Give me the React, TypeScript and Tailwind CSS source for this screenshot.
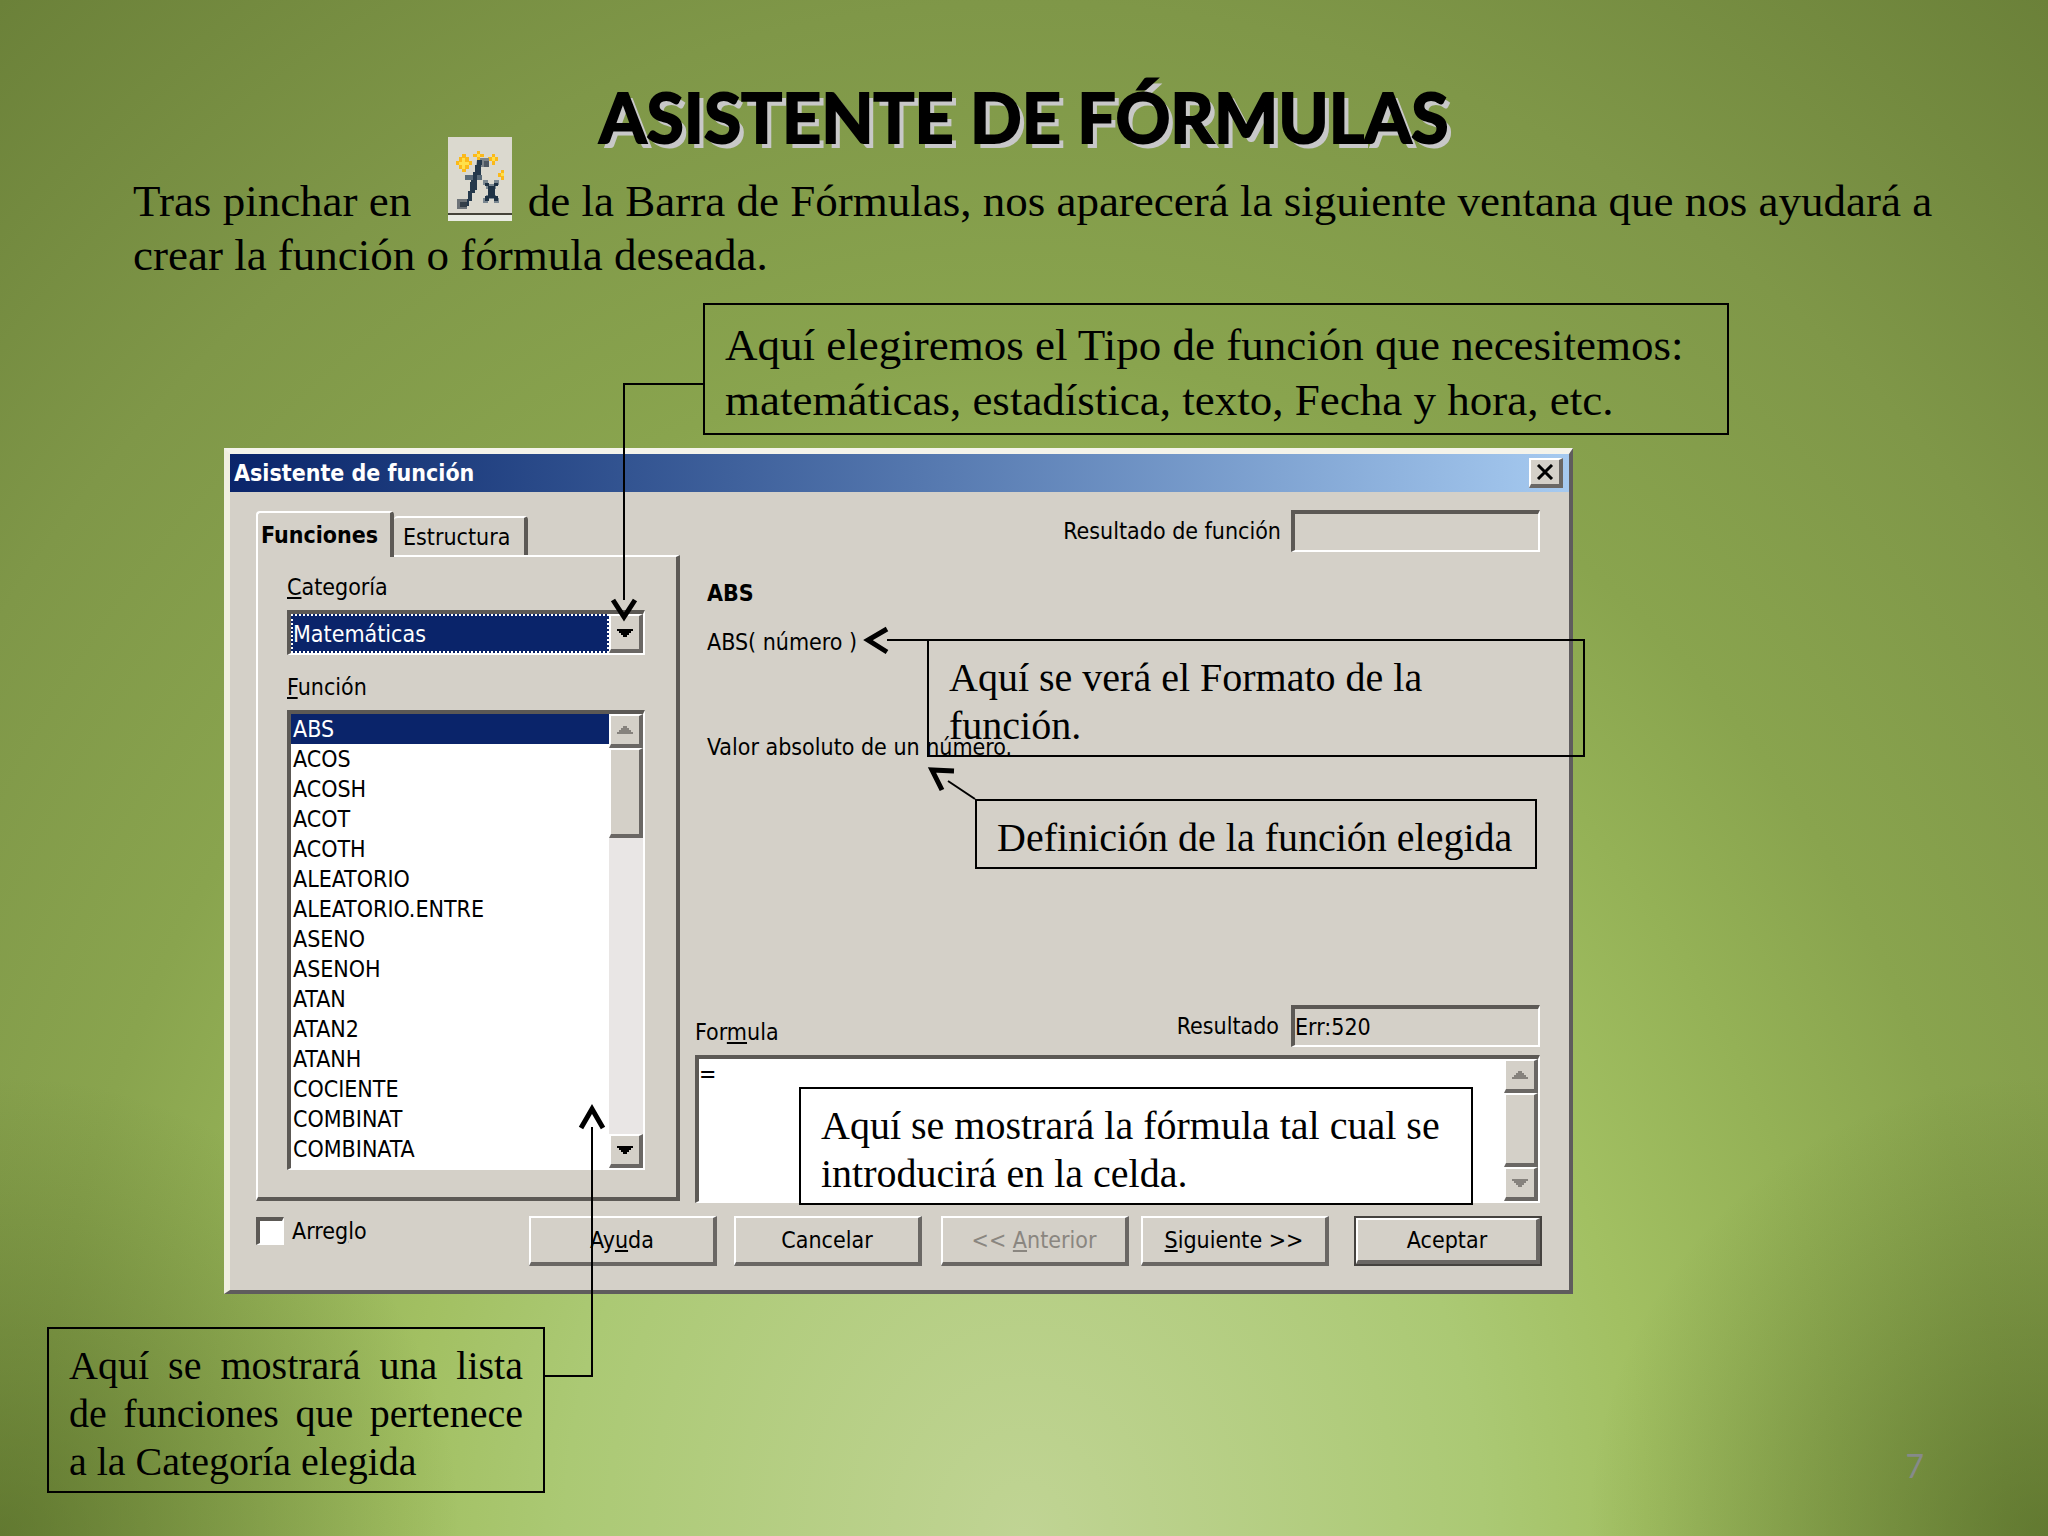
import type { ReactNode } from "react";

const functionNames = [
  "ABS",
  "ACOS",
  "ACOSH",
  "ACOT",
  "ACOTH",
  "ALEATORIO",
  "ALEATORIO.ENTRE",
  "ASENO",
  "ASENOH",
  "ATAN",
  "ATAN2",
  "ATANH",
  "COCIENTE",
  "COMBINAT",
  "COMBINATA",
];

const raised =
  "border-t-2 border-l-2 border-r-4 border-b-4 border-t-white border-l-white border-r-[#6a6764] border-b-[#6a6764] bg-[#d4d0c8]";
const sunken =
  "border-t-4 border-l-4 border-r-2 border-b-2 border-t-[#5c5955] border-l-[#5c5955] border-r-white border-b-white";

function Arrow({ up = false, muted = false }: { up?: boolean; muted?: boolean }) {
  return (
    <svg viewBox="0 0 16 10" className="h-[10px] w-4" aria-hidden="true">
      <path
        d={up ? "M0 9h16v-2h-2v-2h-2v-2h-2v-2h-4v2h-2v2h-2v2h-2z" : "M0 1h16v2h-2v2h-2v2h-2v2h-4v-2h-2v-2h-2v-2h-2z"}
        fill={muted ? "#86827d" : "#000"}
      />
    </svg>
  );
}

function ScrollButton({ up, muted }: { up?: boolean; muted?: boolean }) {
  return (
    <button
      type="button"
      aria-label={up ? "Subir" : "Bajar"}
      className={`flex h-[34px] w-[34px] shrink-0 items-center justify-center ${raised}`}
    >
      <Arrow up={up} muted={muted} />
    </button>
  );
}

function DialogButton({ children, disabled }: { children: ReactNode; disabled?: boolean }) {
  return (
    <button type="button" disabled={disabled} className={`h-[50px] w-[188px] disabled:text-[#8a8680] ${raised}`}>
      {children}
    </button>
  );
}

function WizardIcon() {
  return (
    <svg
      viewBox="0 0 64 84"
      className="-mt-12 mr-[5px] mb-[5px] ml-[25px] inline-block h-[84px] w-16"
      role="img"
      aria-label="fx"
    >
      <rect width="64" height="84" fill="#dbd9cf" />
      <rect y="76" width="64" height="2" fill="#45443a" />
      <rect y="78" width="64" height="6" fill="#e9ebe3" />
      {/* sparkles */}
      <g fill="#fbb91a">
        <path d="M14 17h4v3h3v4h3v4h-3v4h-3v3h-4v-3h-3v-4h-3v-4h3v-4h3z" />
        <path d="M29 14h3v3h4v3h-4v3h-3v-3h-4v-3h4z" />
        <path d="M44 17h3v3h3v4h-3v4h-3v-4h-4v-4h4z" />
        <path d="M53 33h3v10h-3v-3h-3v-4h3z" />
      </g>
      <g fill="#ffe04a">
        <path d="M14 21h3v4h4v3h-4v4h-3v-4h-3v-3h3z" />
        <path d="M29 17h3v3h-3zM44 20h3v4h-3zM53 36h3v3h-3z" />
      </g>
      {/* f */}
      <path d="M32 21h9v9h-9z" fill="#7d8489" />
      <path d="M36 24h5v6h-5z" fill="#4e5862" />
      <path d="M17 38h17v5h-17z" fill="#5a6b78" />
      <path d="M29 23h5v5h-2v10h-3v10h-2v8h-3v8h-3v5h-4v-7h3v-8h2v-9h3v-10h3z" fill="#25394c" />
      <path d="M27 28h6v10h-6zM23 43h6v10h-6z" fill="#25394c" />
      <path d="M9 62h10v10h-10z" fill="#6d7378" />
      <path d="M12 65h7v5h-7z" fill="#343f49" />
      {/* x */}
      <path d="M35 43h5v4h6v-4h5v5h-3v4h-2v6h2v3h3v5h-5v-4h-6v4h-5v-5h3v-3h2v-6h-2v-4h-3z" fill="#7b8891" />
      <path d="M37 46h4v3h5v-3h4v3h-3v10h3v5h-4v-3h-5v3h-4v-5h3v-10h-3z" fill="#1f3345" />
    </svg>
  );
}

function FunctionDialog() {
  return (
    <section
      aria-label="Asistente de función"
      className="ml-[224px] w-[1349px] border-t-[6px] border-l-[6px] border-r-4 border-b-4 border-t-[#f4f3ea] border-l-[#f0efe0] border-r-[#5f5c5d] border-b-[#5f5c5d] bg-[#d4d0c8] font-['DejaVu_Sans_Condensed','DejaVu_Sans',sans-serif] text-[23px] leading-[30px] text-black"
    >
      <header className="flex h-[38px] items-center justify-between bg-linear-to-r from-[#0a246a] to-[#a6caf0] pr-[6px] pl-1">
        <h2 className="font-bold text-white">Asistente de función</h2>
        <button type="button" aria-label="Cerrar" className={`flex h-[30px] w-[34px] items-center justify-center ${raised}`}>
          <svg viewBox="0 0 18 16" className="h-4 w-[18px]" aria-hidden="true">
            <path d="M2 1l14 14M16 1l-14 14" stroke="#000" strokeWidth="3" />
          </svg>
        </button>
      </header>

      <div className="flex pt-[18px] pr-[29px] pl-[26px]">
        <div className="w-[424px] shrink-0 pt-px">
          <div role="tablist" className="flex items-end">
            <button
              type="button"
              role="tab"
              aria-selected="true"
              className="z-10 -mb-0.5 h-[46px] w-[138px] rounded-t border-t-2 border-r-4 border-l-2 border-t-white border-r-[#5c5955] border-l-white bg-[#d4d0c8] pl-[3px] text-left font-bold"
            >
              Funciones
            </button>
            <button
              type="button"
              role="tab"
              aria-selected="false"
              className="h-[39px] w-[134px] rounded-t border-t-2 border-r-4 border-t-white border-r-[#5c5955] pl-[9px] text-left"
            >
              Estructura
            </button>
          </div>
          <div role="tabpanel" className="h-[646px] border-t-2 border-r-4 border-b-4 border-l-2 border-t-white border-r-[#5c5955] border-b-[#5c5955] border-l-white pt-[15px] pr-[30px] pl-[29px]">
            <label htmlFor="category" className="block">
              <u>C</u>ategoría
            </label>
            <div className={`mt-2 flex h-[45px] w-[358px] ${sunken}`}>
              <select
                id="category"
                className="min-w-0 flex-1 appearance-none border-2 border-dotted border-white bg-[#0a246a] text-white outline-none"
              >
                <option>Matemáticas</option>
              </select>
              <div className={`flex w-[34px] items-center justify-center ${raised}`}>
                <Arrow />
              </div>
            </div>
            <p id="function-label" className="mt-[17px]">
              <u>F</u>unción
            </p>
            <div className={`mt-2 flex h-[460px] w-[358px] bg-white ${sunken}`}>
              <ul role="listbox" aria-labelledby="function-label" className="flex-1">
                {functionNames.map((name, index) => (
                  <li
                    key={name}
                    role="option"
                    aria-selected={index === 0}
                    className="pl-0.5 aria-selected:bg-[#0a246a] aria-selected:text-white"
                  >
                    {name}
                  </li>
                ))}
              </ul>
              <div className="flex w-[34px] flex-col bg-[#e9e6e5]">
                <ScrollButton up muted />
                <div className={`h-[90px] ${raised}`} />
                <div className="flex-1" />
                <ScrollButton />
              </div>
            </div>
          </div>
        </div>

        <div className="flex min-w-0 flex-1 flex-col pl-[15px]">
          <div className="flex items-center justify-end gap-[10px]">
            <label htmlFor="function-result">Resultado de función</label>
            <input id="function-result" readOnly className={`h-[42px] w-[249px] ${sunken}`} />
          </div>
          <div className="pl-3">
            <p className="mt-[26px] font-bold">ABS</p>
            <p className="mt-[19px]">ABS( número )</p>
            <p className="mt-[75px]">Valor absoluto de un número.</p>
          </div>
          <div className="mt-[243px] flex items-center justify-end gap-3">
            <label htmlFor="formula" className="mt-3 mr-auto">
              For<u>m</u>ula
            </label>
            <label htmlFor="result">Resultado</label>
            <input id="result" readOnly value="Err:520" className={`h-[42px] w-[249px] ${sunken}`} />
          </div>
          <div className={`mt-2 flex h-[148px] bg-white ${sunken}`}>
            <textarea id="formula" readOnly value="=" className="min-w-0 flex-1 resize-none leading-[30px] outline-none" />
            <div className="flex w-[34px] flex-col">
              <ScrollButton up muted />
              <div className={`flex-1 ${raised}`} />
              <ScrollButton muted />
            </div>
          </div>
        </div>
      </div>

      <footer className="flex h-[87px] items-start justify-end pt-[13px] pr-[27px] pl-[26px]">
        <label className="mr-auto flex items-center gap-2">
          <input type="checkbox" className={`size-7 appearance-none bg-white ${sunken}`} />
          <span>
            Arre<u>g</u>lo
          </span>
        </label>
        <div className="flex gap-[17px]">
          <DialogButton>
            Ay<u>u</u>da
          </DialogButton>
          <DialogButton>Cancelar</DialogButton>
        </div>
        <div className="ml-[19px] flex gap-3">
          <DialogButton disabled>
            &lt;&lt; <u>A</u>nterior
          </DialogButton>
          <DialogButton>
            <u>S</u>iguiente &gt;&gt;
          </DialogButton>
        </div>
        <div className="ml-[25px] border-2 border-[#45423f]">
          <button type="button" className={`block h-[46px] w-[184px] ${raised}`}>
            Aceptar
          </button>
        </div>
      </footer>
    </section>
  );
}

function Callout({ className, children }: { className: string; children: ReactNode }) {
  return <p className={`absolute border-2 border-black px-5 pt-[13px] pb-[5px] ${className}`}>{children}</p>;
}

function Connectors() {
  return (
    <svg className="pointer-events-none absolute top-0 left-0 h-[1536px] w-[2048px]" fill="none" stroke="#000" aria-hidden="true">
      <g strokeWidth="2">
        <path d="M703 384H624V600" />
        <path d="M927 640H887" />
        <path d="M975 799L948 781" />
        <path d="M545 1376H592V1127" />
      </g>
      <g strokeWidth="5">
        <path d="M613 600L624 617L635 600" />
        <path d="M887 629L868 640L887 652" />
        <path d="M954 771L932 770L942 790" />
        <path d="M581 1128L592 1109L603 1128" />
      </g>
    </svg>
  );
}

export default function App() {
  return (
    <main className="relative min-h-screen overflow-hidden bg-[radial-gradient(circle_at_0%_100%,rgb(60_80_20/0.5)_0%,transparent_18%),radial-gradient(circle_at_100%_100%,rgb(60_80_20/0.5)_0%,transparent_18%),radial-gradient(80%_128%_at_50%_100%,#c0d494_0%,#abc974_28%,#a2c062_38%,#94b156_50%,#89a44e_60%,#7f9748_78%,#6b8139_100%)] font-['Liberation_Serif',serif] text-black">
      <h1 className="pt-[72px] text-center font-['Lato',sans-serif] text-[68px] leading-[90px] font-bold [-webkit-text-stroke:2px_#000] [text-shadow:5px_5px_0_#c8c8c8]">
        ASISTENTE DE FÓRMULAS
      </h1>
      <p className="mt-3 mb-[166px] pr-[90px] pl-[133px] text-[45px] leading-[54px]">
        Tras pinchar en <WizardIcon /> de la Barra de Fórmulas, nos aparecerá la siguiente ventana que nos ayudará a crear
        la función o fórmula deseada.
      </p>

      <FunctionDialog />

      <Callout className="top-[303px] left-[703px] w-[1026px] text-[45px] leading-[55px]">
        Aquí elegiremos el Tipo de función que necesitemos: matemáticas, estadística, texto, Fecha y hora, etc.
      </Callout>
      <Callout className="top-[639px] left-[927px] w-[658px] text-[40px] leading-[48px]">
        Aquí se verá el Formato de la
        <br />
        función.
      </Callout>
      <Callout className="top-[799px] left-[975px] w-[562px] text-[40px] leading-[48px]">
        Definición de la función elegida
      </Callout>
      <Callout className="top-[1087px] left-[799px] w-[674px] text-[40px] leading-[48px]">
        Aquí se mostrará la fórmula tal cual se introducirá en la celda.
      </Callout>
      <Callout className="top-[1327px] left-[47px] w-[498px] text-justify text-[40px] leading-[48px]">
        Aquí se mostrará una lista de funciones que pertenece a la Categoría elegida
      </Callout>
      <Connectors />

      <span className="absolute right-[124px] bottom-[50px] font-['Lato',sans-serif] text-[32px] leading-[40px] text-[#868a8a]">7</span>
    </main>
  );
}
